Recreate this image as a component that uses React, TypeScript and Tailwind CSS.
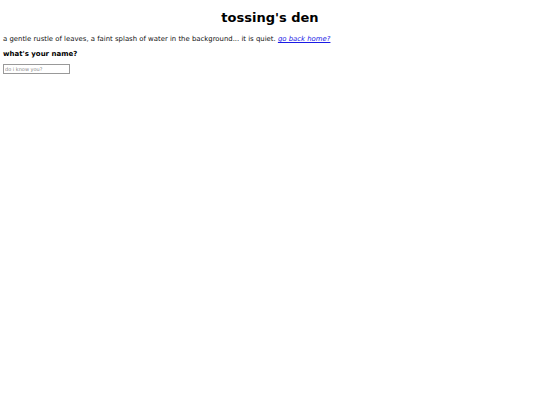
import React from "react";

export default function App() {
  return (
    <div className="min-h-screen bg-white px-[3px] font-['DejaVu_Sans',sans-serif] text-black">
      <h1 className="pt-[10px] text-center text-[13px] font-bold leading-[16px]">tossing's den</h1>
      <p className="mt-[9px] text-[6.9px] leading-[9px] text-[#111]">
        a gentle rustle of leaves, a faint splash of water in the background... it is quiet.{" "}
        <a href="#" className="italic text-[#1a1ae6] underline">go back home?</a>
      </p>
      <h2 className="mt-[6px] text-[7px] font-bold leading-[9px]">what's your name?</h2>
      <input
        type="text"
        placeholder="do i know you?"
        className="mt-[5px] block h-[10px] w-[67px] border border-[#999] px-[1px] text-[5px] leading-[7px] placeholder:text-[#888]"
      />
    </div>
  );
}
